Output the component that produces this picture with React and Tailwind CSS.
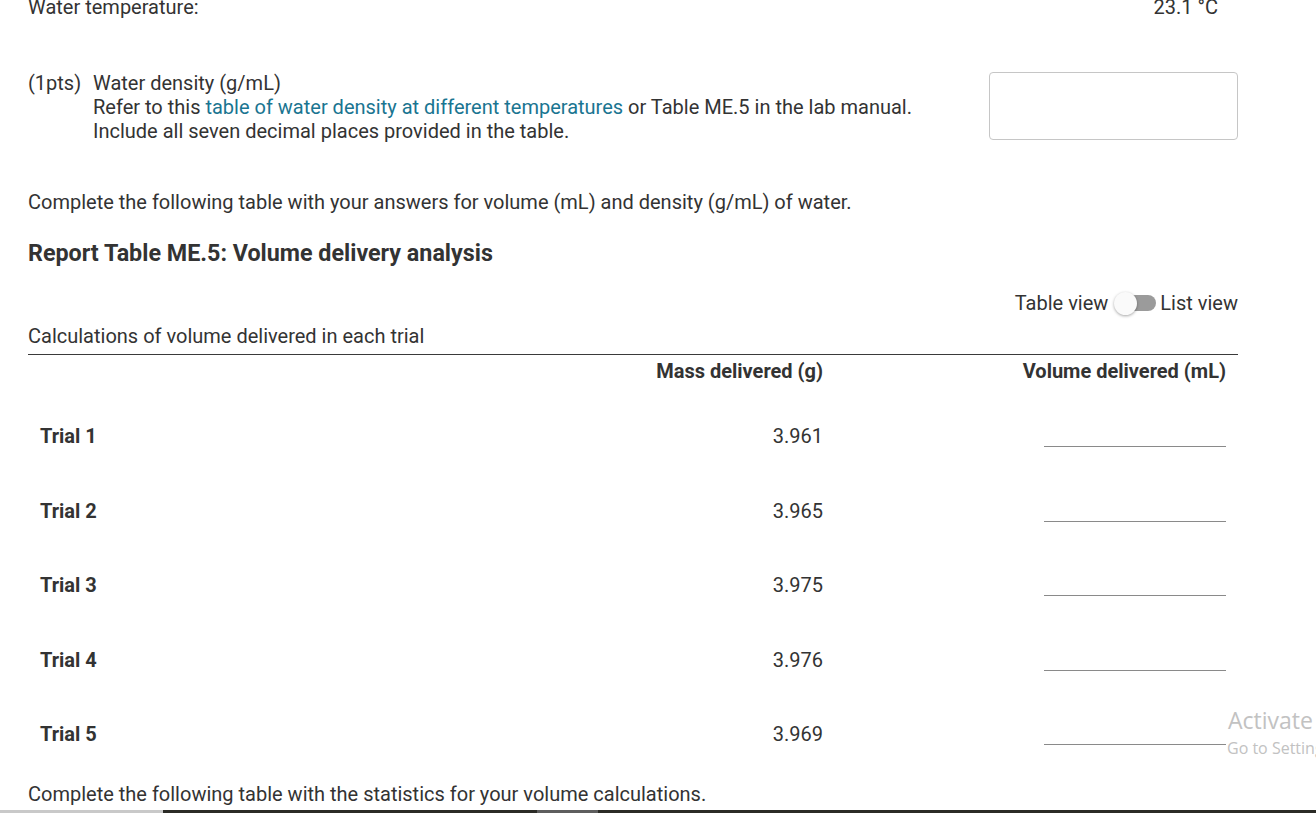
import React from "react";

const trials = [
  ["Trial 1", "3.961"],
  ["Trial 2", "3.965"],
  ["Trial 3", "3.975"],
  ["Trial 4", "3.976"],
  ["Trial 5", "3.969"],
];

export default function App() {
  return (
    <div
      className="relative w-[1316px] h-[813px] overflow-hidden bg-white text-[#333333] text-[20px] leading-[24px]"
      style={{ fontFamily: "Roboto, 'Liberation Sans', sans-serif" }}
    >
      <div className="w-[1238px] pl-[28px] -mt-[5px]">
        <div className="flex justify-between h-[24px]">
          <span>Water temperature:</span>
          <span className="pr-[20px]">23.1 °C</span>
        </div>

        <div className="flex mt-[52px] h-[68px]">
          <div className="w-[65px]">(1pts)</div>
          <div className="flex-1">
            <div>Water density (g/mL)</div>
            <div>
              Refer to this{" "}
              <span className="text-[#1a7591]">table of water density at different temperatures</span>{" "}
              or Table ME.5 in the lab manual.
            </div>
            <div>Include all seven decimal places provided in the table.</div>
          </div>
          <div className="w-[249px] h-[68px] border border-[#c6c6c6] rounded-[4px] mt-px"></div>
        </div>

        <div className="mt-[51px]">
          Complete the following table with your answers for volume (mL) and density (g/mL) of water.
        </div>

        <div className="mt-[25px] text-[23.3px] leading-[28px] font-bold">
          Report Table ME.5: Volume delivery analysis
        </div>

        <div className="mt-[24px] flex justify-end items-center h-[24px]">
          <span>Table view</span>
          <div className="relative w-[42px] h-[24px] ml-[6px] mr-[4px] flex items-center">
            <div className="absolute left-[6px] right-0 h-[16px] rounded-full bg-[#9b9b9b]"></div>
            <div className="absolute left-0 top-px w-[23px] h-[23px] rounded-full bg-[#fafafa] shadow-[0_1px_3px_rgba(0,0,0,0.35)]"></div>
          </div>
          <span>List view</span>
        </div>

        <div className="mt-[9px] pb-[6px] border-b border-[#3a3a3a]">
          Calculations of volume delivered in each trial
        </div>

        <div className="flex h-[44px] pt-[4px] font-bold">
          <div className="flex-1"></div>
          <div className="w-[300px] text-right">Mass delivered (g)</div>
          <div className="w-[415px] pr-[12px] text-right">Volume delivered (mL)</div>
        </div>

        {trials.map(([t, m]) => (
          <div key={t} className="flex items-center h-[74.5px]">
            <div className="flex-1 pl-[12px] font-bold">{t}</div>
            <div className="w-[300px] text-right">{m}</div>
            <div className="w-[415px] pr-[12px] flex justify-end">
              <div className="w-[182px] h-[22px] border-b border-[#8a8a8a]"></div>
            </div>
          </div>
        ))}

        <div className="mt-[10px]">
          Complete the following table with the statistics for your volume calculations.
        </div>
      </div>

      <div className="absolute left-0 bottom-0 w-full h-[3px] flex">
        <div className="w-[163px] bg-[#c9c9c9]"></div>
        <div className="w-[374px] bg-[#2b2b26]"></div>
        <div className="w-[61px] bg-[#5e5e5e]"></div>
        <div className="flex-1 bg-[#2b2b26]"></div>
      </div>

      <div
        className="absolute left-[1228px] top-[704px] text-[#c2c2c2] whitespace-nowrap"
        style={{ fontFamily: "'Open Sans', 'Noto Sans', sans-serif" }}
      >
        <div className="text-[23px] leading-[32px]">Activate Windows</div>
        <div className="text-[16px] leading-[24px] -ml-px">Go to Settings to activate Windows.</div>
      </div>
    </div>
  );
}
